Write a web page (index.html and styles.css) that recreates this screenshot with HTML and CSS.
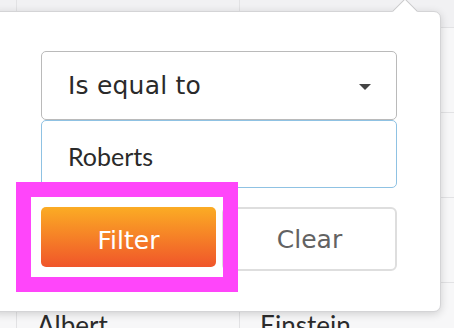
FILE: index.html
```html
<!DOCTYPE html>
<html lang="en">
<head>
<meta charset="utf-8">
<link rel="stylesheet" href="styles.css">
</head>
<body>
<div class="grid">
  <div class="row head">
    <div class="cell c0"></div>
    <div class="cell c1"></div>
    <div class="cell c2"></div>
  </div>
  <div class="row">
    <div class="cell c0"></div>
    <div class="cell c1"></div>
    <div class="cell c2"></div>
  </div>
  <div class="row">
    <div class="cell c0"></div>
    <div class="cell c1"></div>
    <div class="cell c2"></div>
  </div>
  <div class="row">
    <div class="cell c0"></div>
    <div class="cell c1"></div>
    <div class="cell c2"></div>
  </div>
  <div class="row">
    <div class="cell c0"></div>
    <div class="cell c1">Albert</div>
    <div class="cell c2">Einstein</div>
  </div>
</div>

<div class="popup">
  <span class="arrow"></span>
  <div class="select">
    <span class="select-text">Is equal to</span>
    <span class="caret"></span>
  </div>
  <div class="input">Roberts</div>
  <div class="actions">
    <div class="highlight">
      <button class="btn btn-filter">Filter</button>
    </div>
    <button class="btn btn-clear">Clear</button>
  </div>
</div>
</body>
</html>
```

FILE: styles.css
```css
* { box-sizing: border-box; }
html, body {
  margin: 0;
  padding: 0;
  width: 454px;
  height: 328px;
  overflow: hidden;
  background: #f7f7f8;
}
body { position: relative; font-family: "DejaVu Sans", Verdana, sans-serif; }

.grid { display: flex; flex-direction: column; }
.row {
  display: grid;
  grid-template-columns: 16px 223px 1fr;
  height: 85px;
  border-bottom: 1px solid #e2e2e4;
}
.row.head { height: 28px; background: #f1f1f3; }
.cell {
  border-left: 1px solid #e2e2e4;
  display: flex;
  align-items: center;
  padding-left: 20px;
  font-family: Lato, "Open Sans", sans-serif;
  font-size: 26px;
  color: #2b2b2b;
}
.cell.c0 { border-left: none; padding: 0; }

.popup {
  position: absolute;
  left: -10px;
  top: 11px;
  width: 451px;
  height: 301px;
  background: #fff;
  border: 1px solid #d4d4d6;
  border-radius: 7px;
  box-shadow: 0 2px 9px rgba(0, 0, 0, 0.16);
  padding: 39px 43px 0 50px;
}
.arrow {
  position: absolute;
  left: 405px;
  top: -10px;
  width: 18px;
  height: 18px;
  background: #fff;
  border-top: 1px solid #c9c9cb;
  border-left: 1px solid #c9c9cb;
  transform: rotate(45deg);
}

.select {
  height: 69px;
  border: 1px solid #bababa;
  border-radius: 5px;
  display: flex;
  align-items: center;
  justify-content: space-between;
  padding: 0 25px 0 26px;
}
.select-text {
  font-size: 25px;
  letter-spacing: 0.2px;
  color: #2a2a2a;
}
.caret {
  width: 0;
  height: 0;
  border-left: 6px solid transparent;
  border-right: 6px solid transparent;
  border-top: 6px solid #444;
  margin-top: 2px;
}

.input {
  height: 68px;
  border: 1px solid #8fc2e3;
  border-radius: 5px;
  display: flex;
  align-items: center;
  padding: 4px 0 0 26px;
  font-family: Lato, "Open Sans", sans-serif;
  font-size: 25px;
  color: #2a2a2a;
}

.actions {
  display: flex;
  align-items: flex-start;
  gap: 6px;
  margin-top: 19px;
}
.highlight {
  position: relative;
  width: 175px;
  flex: none;
}
.highlight::after {
  content: "";
  position: absolute;
  top: -25px;
  left: -25px;
  right: -22px;
  bottom: -25px;
  border: 15px solid #ff45fa;
  z-index: 2;
}
.btn {
  font-family: "DejaVu Sans", Verdana, sans-serif;
  font-size: 25px;
  margin: 0;
  cursor: pointer;
}
.btn-filter {
  display: block;
  width: 175px;
  height: 60px;
  padding: 6px 0 0;
  border: none;
  border-radius: 5px;
  color: #fff;
  background: linear-gradient(to bottom, #fbac24, #f0552a);
}
.btn-clear {
  flex: 1;
  height: 64px;
  padding: 0;
  background: #fff;
  border: 2px solid #dedede;
  border-radius: 6px;
  color: #626262;
}
```
